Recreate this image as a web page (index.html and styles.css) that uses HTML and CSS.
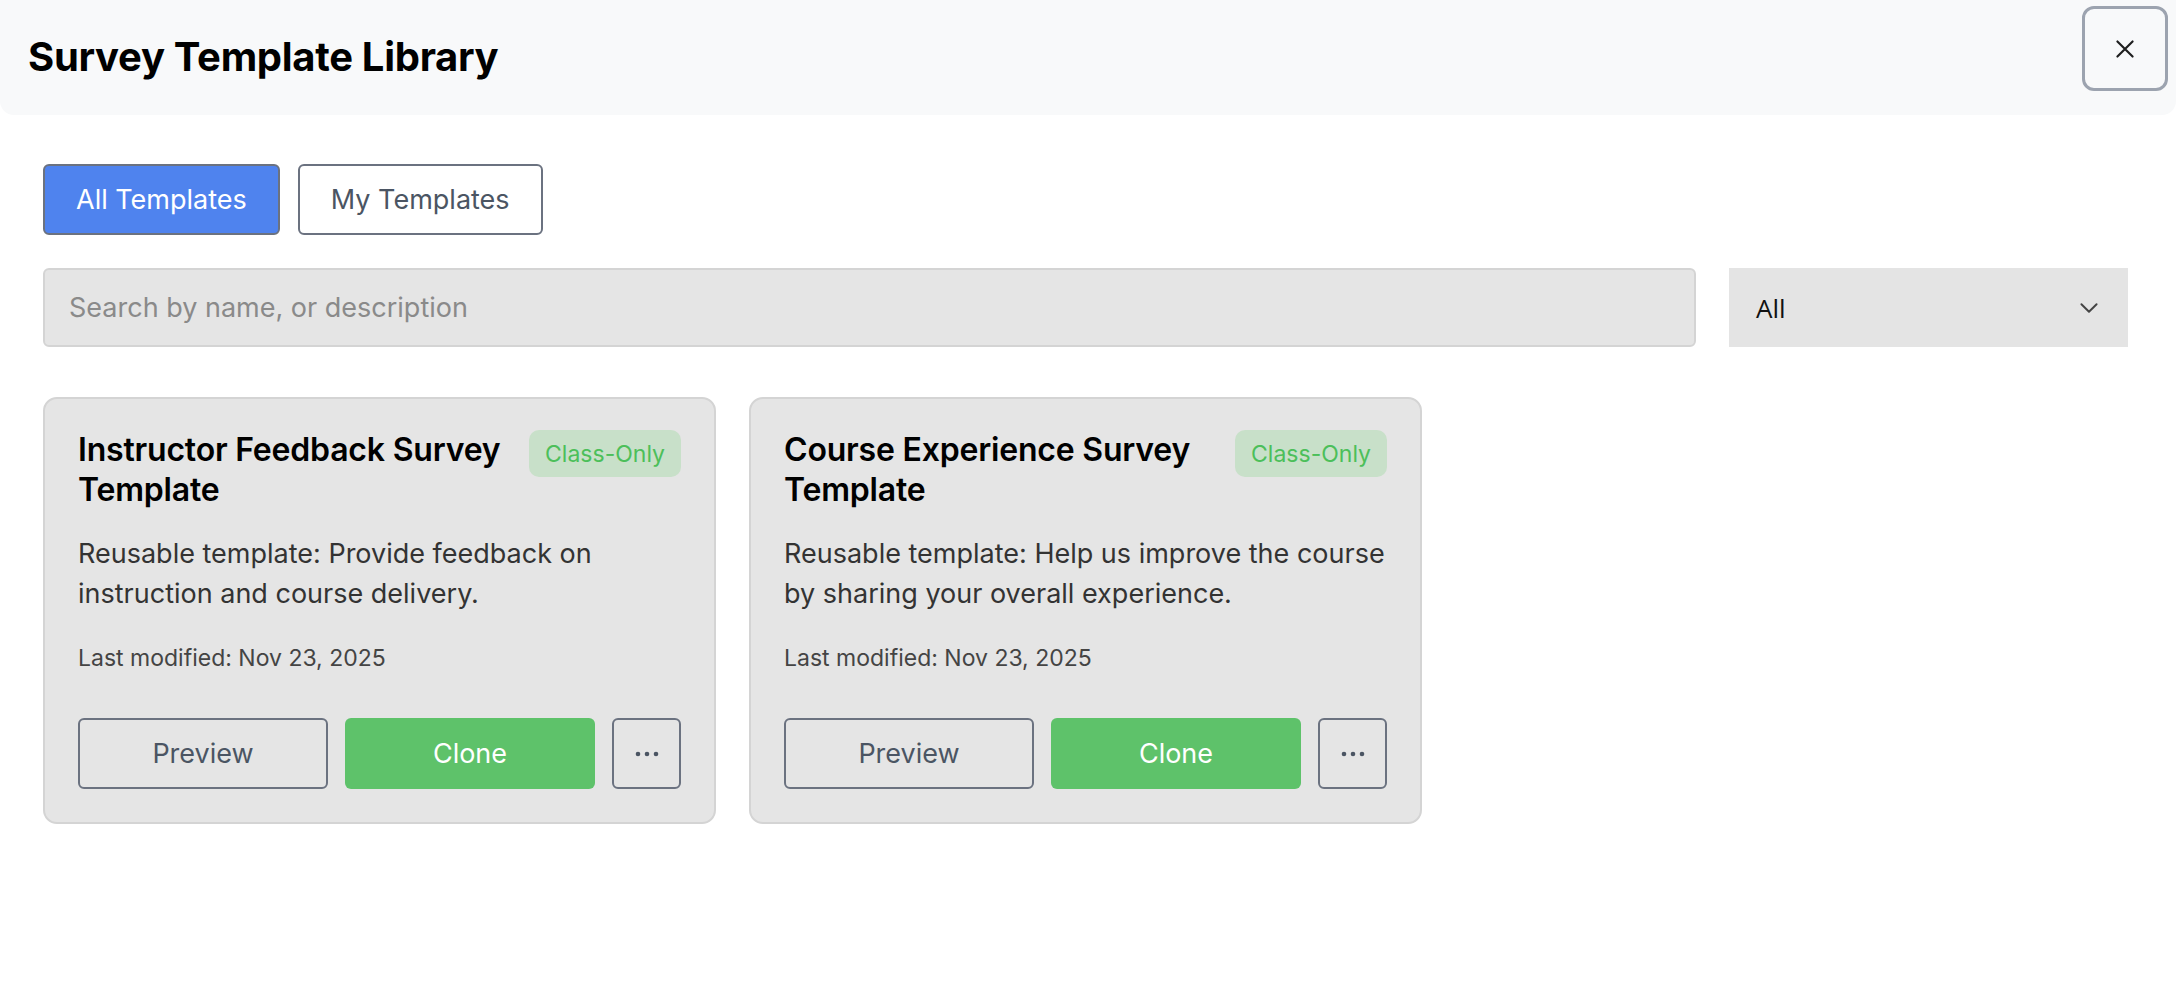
FILE: index.html
```html
<!DOCTYPE html>
<html lang="en">
<head>
<meta charset="utf-8">
<title>Survey Template Library</title>
<link rel="stylesheet" href="styles.css">
</head>
<body>
<div class="modal">
  <header class="modal-header">
    <h1 class="modal-title">Survey Template Library</h1>
    <button class="close-btn" aria-label="Close">
      <svg width="26" height="26" viewBox="0 0 24 24"><path d="M5 5 L19 19 M19 5 L5 19" stroke="#1f1f1f" stroke-width="2" stroke-linecap="round" fill="none"/></svg>
    </button>
  </header>
  <div class="modal-body">
    <div class="tabs">
      <button class="tab tab-active">All Templates</button>
      <button class="tab">My Templates</button>
    </div>
    <div class="filters">
      <div class="search">Search by name, or description</div>
      <div class="select">
        <span>All</span>
        <svg width="26" height="26" viewBox="0 0 24 24"><path d="M5 8.5 L12 15.5 L19 8.5" stroke="#444" stroke-width="1.8" stroke-linecap="round" stroke-linejoin="round" fill="none"/></svg>
      </div>
    </div>
    <div class="grid">
      <div class="card">
        <div class="card-head">
          <h2 class="card-title">Instructor Feedback Survey Template</h2>
          <span class="badge">Class-Only</span>
        </div>
        <p class="card-desc">Reusable template: Provide feedback on instruction and course delivery.</p>
        <p class="card-meta">Last modified: Nov 23, 2025</p>
        <div class="card-actions">
          <button class="btn btn-outline">Preview</button>
          <button class="btn btn-green">Clone</button>
          <button class="btn btn-more"><svg width="28" height="8" viewBox="0 0 28 8"><circle cx="5" cy="4" r="2.3" fill="#4b5563"/><circle cx="14" cy="4" r="2.3" fill="#4b5563"/><circle cx="23" cy="4" r="2.3" fill="#4b5563"/></svg></button>
        </div>
      </div>
      <div class="card">
        <div class="card-head">
          <h2 class="card-title">Course Experience Survey Template</h2>
          <span class="badge">Class-Only</span>
        </div>
        <p class="card-desc">Reusable template: Help us improve the course by sharing your overall experience.</p>
        <p class="card-meta">Last modified: Nov 23, 2025</p>
        <div class="card-actions">
          <button class="btn btn-outline">Preview</button>
          <button class="btn btn-green">Clone</button>
          <button class="btn btn-more"><svg width="28" height="8" viewBox="0 0 28 8"><circle cx="5" cy="4" r="2.3" fill="#4b5563"/><circle cx="14" cy="4" r="2.3" fill="#4b5563"/><circle cx="23" cy="4" r="2.3" fill="#4b5563"/></svg></button>
        </div>
      </div>
    </div>
  </div>
</div>
</body>
</html>
```

FILE: styles.css
```css
* { box-sizing: border-box; }
html, body { margin: 0; padding: 0; background: #ffffff; }
body { font-family: Inter, "Liberation Sans", sans-serif; color: #111; }

.modal { width: 2176px; }

.modal-header {
  height: 115px;
  background: #f8f9fa;
  border-radius: 0 0 14px 14px;
  display: flex;
  align-items: flex-start;
  justify-content: space-between;
  padding: 6px 8px 0 28px;
}
.modal-title {
  margin: 0;
  padding-top: 29px;
  font-size: 40px;
  font-weight: 700;
  letter-spacing: -0.3px;
  line-height: 44px;
  color: #000;
}
.close-btn {
  width: 86px;
  height: 85px;
  border: 3px solid #9ca3af;
  border-radius: 12px;
  background: transparent;
  display: flex;
  align-items: center;
  justify-content: center;
  padding: 0;
}

.modal-body { padding: 49px 48px 0 43px; }

.tabs { display: flex; gap: 18px; }
.tab {
  height: 71px;
  padding: 0 31px;
  font-family: Inter, "Liberation Sans", sans-serif;
  font-size: 27px;
  border: 2px solid #6b7280;
  border-radius: 6px;
  background: #fff;
  color: #4b5563;
}
.tab-active { background: #4f83ee; color: #fff; }

.filters { display: flex; gap: 33px; margin-top: 33px; }
.search {
  flex: 1;
  height: 79px;
  background: #e5e5e5;
  border: 2px solid #d4d4d4;
  border-radius: 6px;
  padding-left: 24px;
  display: flex;
  align-items: center;
  font-size: 27px;
  color: #8a8a8a;
}
.select {
  width: 399px;
  height: 79px;
  background: #e4e4e4;
  display: flex;
  align-items: center;
  justify-content: space-between;
  padding: 0 26px 0 27px;
  font-family: "Open Sans", "Noto Sans", sans-serif;
  font-size: 26px;
  color: #111;
}

.grid { display: flex; gap: 33px; margin-top: 50px; }
.card {
  width: 673px;
  height: 427px;
  background: #e5e5e5;
  border: 2px solid #d4d4d4;
  border-radius: 14px;
  padding: 31px 33px 33px 33px;
  display: flex;
  flex-direction: column;
}
.card-head { display: flex; justify-content: space-between; align-items: flex-start; gap: 16px; }
.card-title {
  margin: 0;
  font-size: 32px;
  font-weight: 600;
  letter-spacing: -0.2px;
  line-height: 40px;
  color: #000;
}
.badge {
  flex: none;
  height: 47px;
  padding: 0 16px;
  display: flex;
  align-items: center;
  background: #c8e0c9;
  color: #4cbf5a;
  border-radius: 10px;
  font-size: 23px;
}
.card-desc {
  margin: 24px 0 0 0;
  font-size: 27px;
  line-height: 40px;
  color: #333;
}
.card-meta {
  margin: 29px 0 0 0;
  font-size: 23px;
  line-height: 30px;
  color: #444;
}
.card-actions { display: flex; gap: 17px; margin-top: auto; }
.btn {
  height: 71px;
  border-radius: 6px;
  font-family: Inter, "Liberation Sans", sans-serif;
  font-size: 27px;
  display: flex;
  align-items: center;
  justify-content: center;
}
.btn-outline { width: 250px; border: 2px solid #6b7280; background: transparent; color: #4b5563; }
.btn-green { width: 250px; border: none; background: #5ec26a; color: #fff; }
.btn-more { width: 69px; border: 2px solid #6b7280; background: transparent; }
```
